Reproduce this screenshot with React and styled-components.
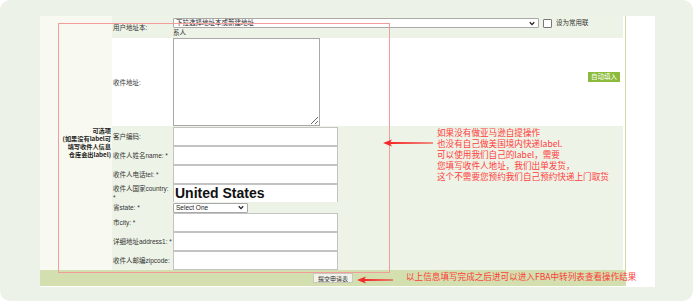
import React from 'react'
import styled, { createGlobalStyle } from 'styled-components'

const GlobalStyle = createGlobalStyle`
  body {
    margin: 0;
    background: #fff;
    font-family: "Liberation Sans", "Noto Sans CJK SC", sans-serif;
  }
`

const rows = [
    { label: '客户编码:' },
    { label: '收件人姓名name: *' },
    { label: '收件人电话tel: *' },
    { label: '收件人国家country:\n*', value: 'United States' },
    { label: '省state: *', select: 'Select One' },
    { label: '市city: *' },
    { label: '详细地址address1: *' },
    { label: '收件人邮编zipcode:' },
]

const notes = [
    '如果没有做亚马逊自提操作',
    '也没有自己做美国境内快递label.',
    '可以使用我们自己的label，需要',
    '您填写收件人地址，我们出单发货，',
    '这个不需要您预约我们自己预约快递上门取货',
]

function Chevron() {
    return (
        <svg width="6" height="5" viewBox="0 0 6 5">
            <path d="M0.8 1.2 L3 3.6 L5.2 1.2" fill="none" stroke="#222" strokeWidth="1.3" />
        </svg>
    )
}

function Arrow({ width }) {
    // tip on the left, tapering tail on the right
    return (
        <svg width={width} height="8" viewBox={`0 0 ${width} 8`}>
            <polygon
                points={`0,4 9,0.6 7.5,3 ${width},3.6 ${width},4.4 7.5,5 9,7.4`}
                fill="#f52a2a"
            />
        </svg>
    )
}

function App() {
    return (
        <>
            <GlobalStyle />
            <Frame>
                <Sheet>
                    <Form>
                        <Side $row="1 / span 2" />
                        <Label $row={1}>用户地址本:</Label>
                        <Field $row={1} $top>
                            <Wrap>
                                <SelectBox $width={366}>
                                    <span>下拉选择地址本或新建地址</span>
                                    <Chevron />
                                </SelectBox>
                                <Check />
                                设为常用联系人
                            </Wrap>
                        </Field>

                        <Label $row={2} $plain>收件地址:</Label>
                        <Field $row={2} $plain $top>
                            <TextArea />
                            <FillButton>自动填入</FillButton>
                        </Field>

                        <Side $row="3 / span 8">
                            <SideText>
                                可选项<br />
                                (如果没有label可<br />
                                填写收件人信息<br />
                                仓库会出label)
                            </SideText>
                        </Side>

                        {rows.map((r, i) => (
                            <React.Fragment key={r.label}>
                                <Label $row={i + 3}>{r.label}</Label>
                                <Field $row={i + 3}>
                                    {r.select ? (
                                        <SelectBox $width={75}>
                                            <span>{r.select}</span>
                                            <Chevron />
                                        </SelectBox>
                                    ) : (
                                        <Input
                                            $big={!!r.value}
                                            defaultValue={r.value || ''}
                                        />
                                    )}
                                </Field>
                            </React.Fragment>
                        ))}
                    </Form>
                    <Footer>
                        <SubmitButton>提交申请表</SubmitButton>
                    </Footer>
                </Sheet>

                <Callout />
                <Pointer $x={383} $y={139}>
                    <Arrow width={50} />
                </Pointer>
                <Note $x={437} $y={127}>
                    {notes.map(n => <div key={n}>{n}</div>)}
                </Note>
                <Pointer $x={357} $y={276}>
                    <Arrow width={36} />
                </Pointer>
                <Note $x={406} $y={271}>以上信息填写完成之后进可以进入FBA中转列表查看操作结果</Note>
            </Frame>
        </>
    )
}

const Frame = styled.div`
  position: relative;
  width: 693px;
  height: 301px;
  box-sizing: border-box;
  padding: 16px 0 0 40px;
  background: #edf2e9;
  border-radius: 10px;
  overflow: hidden;
`

const Sheet = styled.div`
  width: 615px;
  height: 271px;
  background: #fff;
  display: flex;
  flex-direction: column;
`

const Form = styled.div`
  width: 586px;
  box-sizing: border-box;
  padding-right: 2px;
  border-right: 1px solid #ccd9a8;
  display: grid;
  grid-template-columns: 72px 61px 1fr;
  grid-template-rows: 22px 88px 20px 19px 19px 18px 11px 19px 19px 19px;
`

const Side = styled.div`
  grid-column: 1;
  grid-row: ${p => p.$row};
  background: #f8f9f0;
  display: flex;
  justify-content: flex-end;
  align-items: flex-start;
`

const SideText = styled.div`
  padding: 1px 1px 0 0;
  font-family: "Noto Sans CJK SC", sans-serif;
  font-size: 6.2px;
  line-height: 8px;
  font-weight: 700;
  color: #222;
  text-align: right;
`

const Label = styled.div`
  grid-column: 2;
  grid-row: ${p => p.$row};
  background: ${p => (p.$plain ? '#fff' : '#eef3e7')};
  display: flex;
  align-items: center;
  padding-left: 1px;
  white-space: pre-line;
  font-size: 6.5px;
  line-height: 9px;
  color: #333;
`

const Field = styled.div`
  grid-column: 3;
  grid-row: ${p => p.$row};
  background: ${p => (p.$plain ? '#fff' : '#eef3e7')};
  display: flex;
  align-items: ${p => (p.$top ? 'flex-start' : 'center')};
  min-width: 0;
`

const Wrap = styled.div`
  width: 418px;
  padding-top: 2px;
  font-size: 6.5px;
  line-height: 10px;
  color: #333;
`

const SelectBox = styled.div`
  display: inline-flex;
  align-items: center;
  justify-content: space-between;
  vertical-align: top;
  width: ${p => p.$width}px;
  height: 10px;
  box-sizing: border-box;
  padding: 0 3px 0 2px;
  background: #fff;
  border: 1px solid #a9a9a9;
  border-radius: 1px;
  font-size: 6.5px;
  color: #222;
`

const Check = styled.span`
  display: inline-block;
  vertical-align: top;
  width: 7px;
  height: 7px;
  margin: 1px 4px 0 4px;
  border: 1px solid #777;
  border-radius: 1px;
  background: #fff;
`

const TextArea = styled.textarea`
  width: 147px;
  height: 88px;
  box-sizing: border-box;
  margin: 0;
  border: 1px solid #a9a9a9;
  resize: both;
`

const FillButton = styled.div`
  margin: 34px 3px 0 auto;
  padding: 0 3px;
  height: 10px;
  line-height: 10px;
  background: #8cbb3c;
  color: #fff;
  font-size: 6.5px;
`

const Input = styled.input`
  width: 165px;
  height: 19px;
  box-sizing: border-box;
  margin: 0;
  padding: 0 1px;
  border: 1px solid #c3c3c3;
  background: #fff;
  font-family: "Liberation Sans", sans-serif;
  font-size: ${p => (p.$big ? '14px' : '7px')};
  font-weight: ${p => (p.$big ? 700 : 400)};
  color: #111;
  outline: none;
`

const Footer = styled.div`
  width: 586px;
  height: 16px;
  background: #d3dfae;
  display: flex;
  align-items: center;
  justify-content: center;
`

const SubmitButton = styled.div`
  width: 40px;
  height: 10px;
  line-height: 10px;
  box-sizing: border-box;
  text-align: center;
  background: #f2f2ec;
  border: 1px solid #c9c9bb;
  font-size: 6px;
  color: #222;
`

const Callout = styled.div`
  position: absolute;
  left: 58px;
  top: 23px;
  width: 332px;
  height: 250px;
  box-sizing: border-box;
  border: 1.5px solid #f39c9c;
  pointer-events: none;
`

const Pointer = styled.div`
  position: absolute;
  left: ${p => p.$x}px;
  top: ${p => p.$y}px;
  line-height: 0;
`

const Note = styled.div`
  position: absolute;
  left: ${p => p.$x}px;
  top: ${p => p.$y}px;
  font-family: "Noto Sans CJK SC", sans-serif;
  font-size: 8.6px;
  line-height: 11px;
  color: #ff3c3c;
  white-space: nowrap;
`

export default App
